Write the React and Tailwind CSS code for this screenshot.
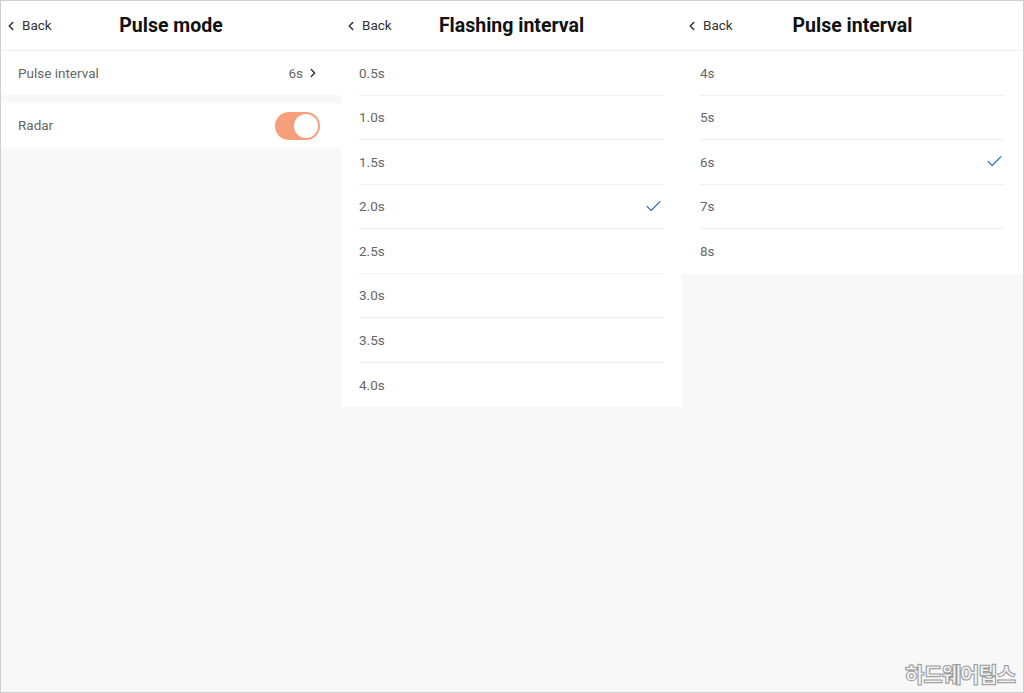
import { ChevronLeft, ChevronRight, Check } from "lucide-react";

const flashing = ["0.5s", "1.0s", "1.5s", "2.0s", "2.5s", "3.0s", "3.5s", "4.0s"];
const pulses = ["4s", "5s", "6s", "7s", "8s"];

function Header({ title }) {
  return (
    <div className="relative flex h-[50px] items-center justify-center border-b border-[#f2f2f2] bg-white">
      <div className="absolute left-[3px] top-0 flex h-full items-center gap-[4px] text-[13.5px] text-[#333]">
        <ChevronLeft size={14} strokeWidth={2.6} />
        <span>Back</span>
      </div>
      <h1 className="text-[19.5px] font-bold text-[#111]">{title}</h1>
    </div>
  );
}

function OptionList({ items, selected }) {
  return (
    <div className="bg-white pl-[18px]">
      {items.map((item, i) => (
        <div
          key={item}
          className={
            "mr-[18px] flex h-[44.5px] items-center justify-between text-[13.5px] text-[#666] " +
            (i < items.length - 1 ? "border-b border-[#f1f1f1]" : "")
          }
        >
          <span>{item}</span>
          {item === selected && (
            <Check size={19} strokeWidth={1.7} className="mr-[1px] text-[#3a7fc0]" />
          )}
        </div>
      ))}
    </div>
  );
}

export default function App() {
  return (
    <div
      className="relative flex h-[693px] w-[1024px] border border-[#cfcfcf] bg-[#f8f8f8]"
      style={{ fontFamily: "Roboto, 'Noto Sans', 'Noto Sans CJK KR', sans-serif" }}
    >
      <div className="w-[340px]">
        <Header title="Pulse mode" />
        <div className="flex h-[44px] items-center justify-between bg-white pl-[17px] pr-[21px] text-[13.5px] text-[#666]">
          <span>Pulse interval</span>
          <div className="flex items-center gap-[3px]">
            <span>6s</span>
            <ChevronRight size={14} strokeWidth={2.4} className="text-[#333]" />
          </div>
        </div>
        <div className="h-[8px]" />
        <div className="flex h-[45px] items-center justify-between bg-white pl-[17px] pr-[21px] text-[13.5px] text-[#666]">
          <span>Radar</span>
          <div className="flex h-[28px] w-[45px] items-center justify-end rounded-full bg-[#f5a07a] p-[2px]">
            <div className="h-[24px] w-[24px] rounded-full bg-white" />
          </div>
        </div>
      </div>
      <div className="w-[341px]">
        <Header title="Flashing interval" />
        <OptionList items={flashing} selected="2.0s" />
      </div>
      <div className="flex-1">
        <Header title="Pulse interval" />
        <OptionList items={pulses} selected="6s" />
      </div>
      <div className="absolute bottom-[1px] right-[8px] text-[21px] font-black tracking-[-1px] text-[#f2f2f2] [-webkit-text-stroke:1px_#9a9a9a]">
        하드웨어팁스
      </div>
    </div>
  );
}
